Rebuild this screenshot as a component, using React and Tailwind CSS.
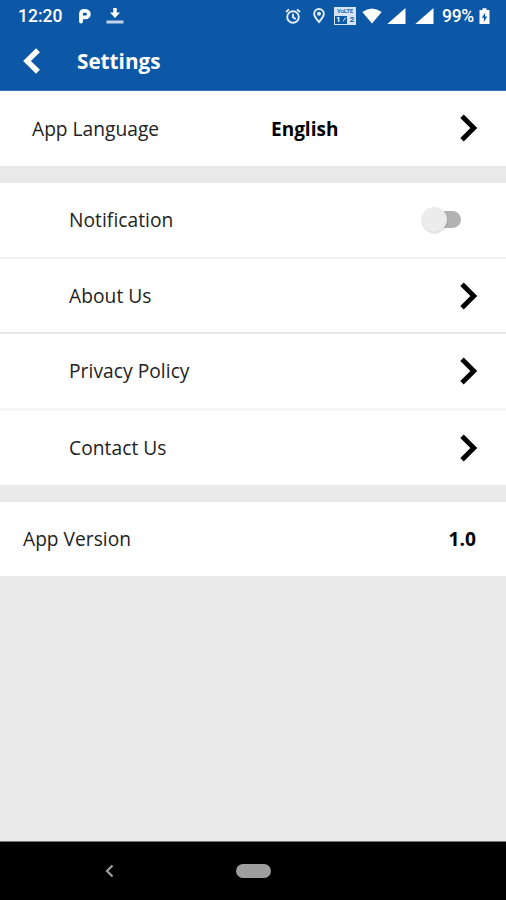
import React from "react";

const menuItems = [
  { label: "Notification", type: "switch", row: "h-[74px]", border: "h-[2px] bg-[#f1f1f1]" },
  { label: "About Us", type: "link", row: "h-[73px]", border: "h-[2px] bg-[#e9e9e9]" },
  { label: "Privacy Policy", type: "link", row: "h-[74px]", border: "h-[3px] bg-[#f7f7f7]" },
  { label: "Contact Us", type: "link", row: "h-[74px]", border: "" },
];

const ChevronRight = () => (
  <svg className="w-[18px] h-[28px] shrink-0" viewBox="0 0 18 28" fill="none" stroke="#000" strokeWidth="4.8">
    <path d="M2 2.3 L13.8 14 L2 25.7" />
  </svg>
);

const Switch = () => (
  <div className="relative w-[39px] h-[26px] mr-[17px]">
    <div className="absolute right-0 top-[4px] w-[30px] h-[17px] rounded-full bg-[#b2b2b2]" />
    <div className="absolute left-0 top-0 w-[25px] h-[25px] rounded-full bg-[#ececec] shadow-[0_1px_2px_rgba(0,0,0,0.2)]" />
  </div>
);

const StatusBar = () => (
  <div className="h-8 pl-[18px] pr-4 flex items-center text-white font-['Roboto',sans-serif] text-[17.5px] font-medium">
    <span className="w-[44px] whitespace-nowrap">12:20</span>
    <svg className="ml-[16px] w-[14px] h-[16px]" viewBox="0 0 14 16" fill="none" stroke="#fff" strokeWidth="3.8">
      <path d="M3 13.6 V6 Q3 2.9 6.2 2.9 H7.6 A3 3 0 0 1 7.6 9.4 H4" strokeLinecap="round" />
    </svg>
    <svg className="ml-[14px] w-[18px] h-[18px]" viewBox="0 0 18 18" fill="#fff">
      <path d="M7.3 1 H10.7 V5.5 H14 L9 11 L4 5.5 H7.3 Z" />
      <path d="M0.5 13.5 H17.5 V16.5 H0.5 Z" opacity="0.75" />
    </svg>

    <div className="ml-auto flex items-center">
      {/* alarm */}
      <svg className="w-[16px] h-[17px]" viewBox="0 0 16 17" fill="none" stroke="#e3efff" strokeWidth="1.9">
        <circle cx="8" cy="9" r="5.8" />
        <path d="M8 5.8 V9.3 L10.8 11 M1 4 L4 1.4 M15 4 L12 1.4" />
      </svg>
      {/* location */}
      <svg className="ml-[12px] w-[12px] h-[16px]" viewBox="0 0 12 16" fill="none" stroke="#e3efff" strokeWidth="1.9">
        <path d="M6 14 C3.5 11.2 1.2 8.7 1.2 5.8 A4.8 4.8 0 0 1 10.8 5.8 C10.8 8.7 8.5 11.2 6 14 Z" />
        <circle cx="6" cy="5.8" r="2" fill="#e3efff" stroke="none" />
      </svg>
      {/* volte */}
      <div className="ml-[9px] w-[22px] h-[18px] border-[1.5px] border-[#d5e5f7] bg-[#d5e5f7] font-bold text-center flex flex-col overflow-hidden">
        <span className="h-[6px] text-[6px] leading-[6px] tracking-[-0.2px] text-[#2c6db5]">VoLTE</span>
        <span className="mt-[2px] h-[8px] flex justify-between text-[8px] leading-[8px] text-[#0d57a7]">
          <span className="w-[12px] bg-[#0d57a7] text-white">1 ⁄</span>
          <span className="w-[6px]">2</span>
        </span>
      </div>
      {/* wifi */}
      <svg className="ml-[6px] w-[20px] h-[16px]" viewBox="0 0 20 16" fill="#fff">
        <path d="M0.3 4 Q10 -3 19.7 4 L10 15.5 Z" />
      </svg>
      {/* sim 1 and sim 2 */}
      <svg className="ml-[5px] w-[19px] h-[17px]" viewBox="0 0 19 17" fill="#fff">
        <path d="M0.3 16 L18.5 0 V16 Z" />
      </svg>
      <svg className="ml-[9px] w-[19px] h-[17px]" viewBox="0 0 19 17" fill="#fff">
        <path d="M0.3 16 L18.5 0 V16 Z" />
      </svg>
      <span className="ml-[8px] w-[33px] whitespace-nowrap tracking-[-0.3px]">99%</span>
      <svg className="ml-[4px] w-[11px] h-[17px]" viewBox="0 0 11 17">
        <path d="M3.5 0.3 H7.5 V2 H10.5 V16 H0.5 V2 H3.5 Z" fill="#fff" />
        <path d="M6.3 4.5 L2.8 9.8 H5 L4.7 14 L8.3 8.5 H6 Z" fill="#0d57a7" />
      </svg>
    </div>
  </div>
);

const App = () => {
  return (
    <div className="w-[506px] h-[900px] flex flex-col bg-[#e9e9e9] overflow-hidden font-['Open_Sans',sans-serif] text-[19.2px] text-[#222]">
      {/* Header Section */}
      <header className="h-[91px] bg-[#0d57a7] border-b border-[#3f70bd]">
        <StatusBar />
        <div className="h-[58px] flex items-center pl-[22px]">
          <svg className="w-[18px] h-[26px]" viewBox="0 0 18 26" fill="none" stroke="#fff" strokeWidth="5.4">
            <path d="M16 2.2 L5 13 L16 23.8" />
          </svg>
          <h1 className="ml-[37px] pt-px text-[20.7px] font-bold text-white whitespace-nowrap">Settings</h1>
        </div>
      </header>

      {/* App Language */}
      <div className="h-[75px] pl-[32px] pr-[28px] pb-px flex items-center bg-white">
        <span className="pt-[2px] w-[239px] whitespace-nowrap">App Language</span>
        <span className="pt-[2px] text-[19px] font-bold text-black">English</span>
        <div className="ml-auto">
          <ChevronRight />
        </div>
      </div>

      {/* Menu */}
      <div className="mt-[17px] bg-white">
        {menuItems.map((item) => (
          <div key={item.label}>
            <div className={`${item.row} pl-[69px] pr-[28px] flex items-center justify-between`}>
              <span className="pt-px whitespace-nowrap tracking-[0.05px]">{item.label}</span>
              {item.type === "switch" ? <Switch /> : <ChevronRight />}
            </div>
            <div className={item.border} />
          </div>
        ))}
      </div>

      {/* App Version */}
      <div className="mt-[17px] h-[74px] pl-[23px] pr-[30px] flex items-center justify-between bg-white">
        <span className="pt-px">App Version</span>
        <span className="pt-px font-bold text-black">1.0</span>
      </div>

      {/* Navigation bar */}
      <nav className="mt-auto h-[59px] bg-black border-t border-[#777] flex items-center pl-[105px]">
        <svg className="w-[9px] h-[14px]" viewBox="0 0 9 14" fill="none" stroke="#a0a0a0" strokeWidth="2.2">
          <path d="M7.5 1.5 L2 7 L7.5 12.5" />
        </svg>
        <div className="ml-[122px] w-[35px] h-[14px] rounded-full bg-[#9e9e9e]" />
      </nav>
    </div>
  );
};

export default App;
